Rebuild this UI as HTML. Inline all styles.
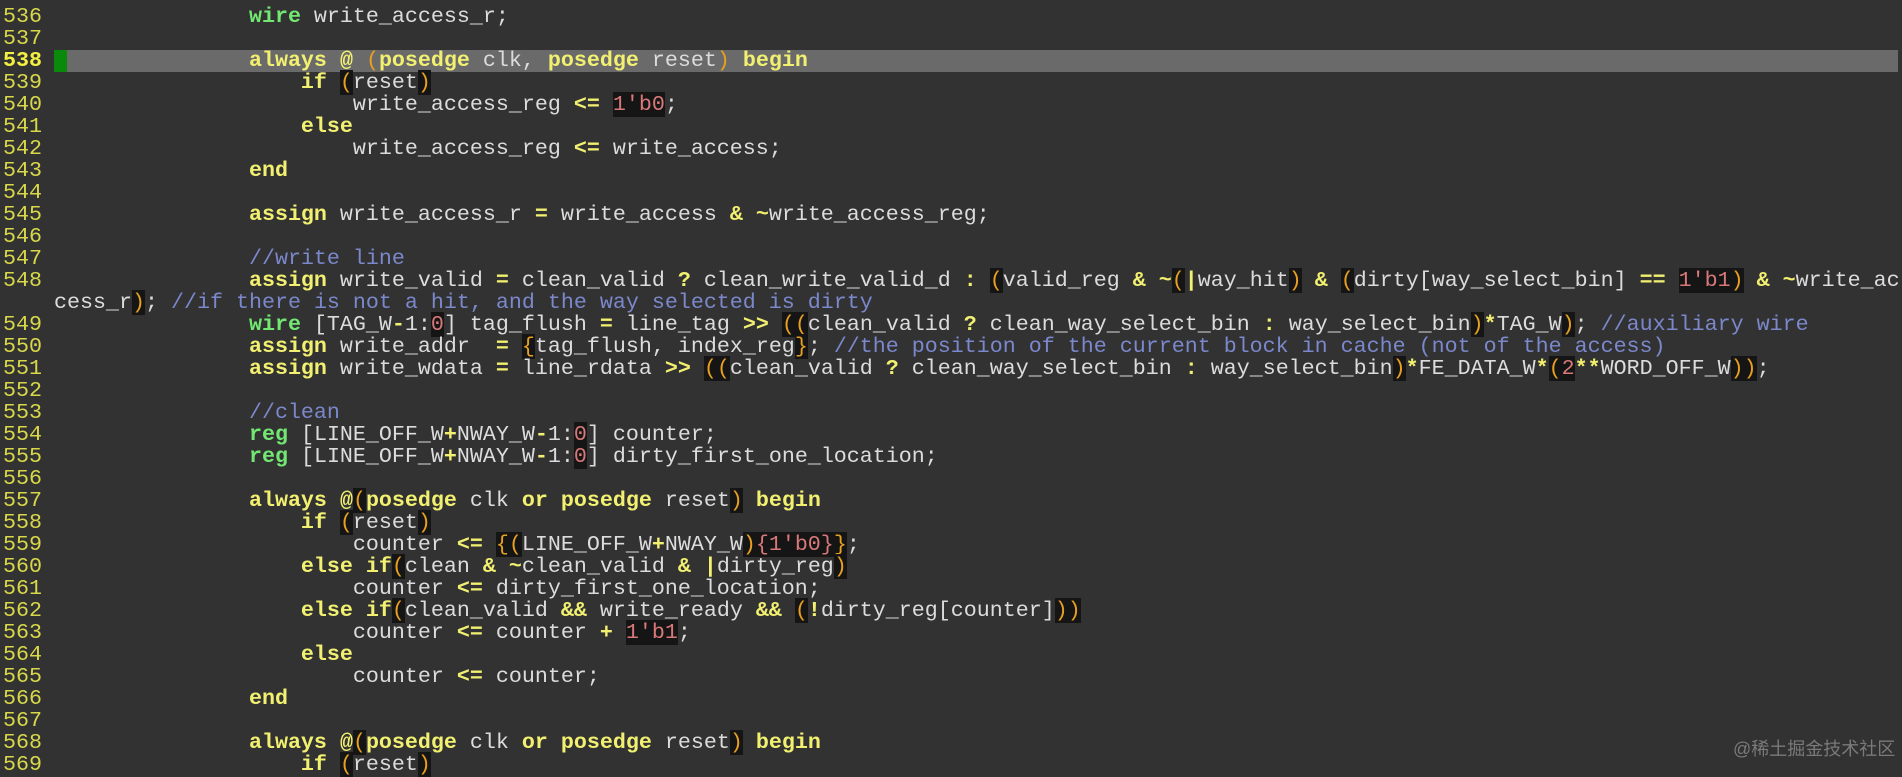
<!DOCTYPE html>
<html><head><meta charset="utf-8"><style>
html,body{margin:0;padding:0;background:#323232;width:1902px;height:771px;overflow:hidden}
.r{position:absolute;left:0;height:22px;width:1902px;font-family:"Liberation Mono",monospace;font-size:21.67px;line-height:22px;white-space:pre;color:#dcdcdc}
.ln{position:absolute;left:3px;color:#d8d84a}
.tx{position:absolute;left:54px}
.k{color:#f2f070;font-weight:bold}
.t{color:#72e872;font-weight:bold}
.o{color:#f2f070;font-weight:bold}
.p{color:#e8a020;background:#151515}
.n{color:#d87878;background:#151515}
.c{color:#7b88cc}
.hl{position:absolute;left:67px;width:1831px;top:0;height:22px;background:#6a6a6a}
.sg{position:absolute;left:54px;width:13px;top:0;height:22px;background:#0a8a0a}
.wm{position:absolute;left:1733px;top:735px;font-family:"Liberation Sans","Noto Sans CJK SC",sans-serif;font-size:18px;color:#7a7a7a}
</style></head><body>
<div class="r" style="top:6px"><span class="ln">536</span><span class="tx">               <span class="t">wire</span> write_access_r;</span></div>
<div class="r" style="top:28px"><span class="ln">537</span></div>
<div class="r" style="top:50px"><div class="hl"></div><div class="sg"></div><span class="ln" style="font-weight:bold;color:#f2f040">538</span><span class="tx">               <span class="k">always</span> <span class="o">@</span> <span style="color:#e8a020">(</span><span class="k">posedge</span> clk, <span class="k">posedge</span> reset<span style="color:#e8a020">)</span> <span class="k">begin</span></span></div>
<div class="r" style="top:72px"><span class="ln">539</span><span class="tx">                   <span class="k">if</span> <span class="p">(</span>reset<span class="p">)</span></span></div>
<div class="r" style="top:94px"><span class="ln">540</span><span class="tx">                       write_access_reg <span class="o">&lt;=</span> <span class="n">1'b0</span>;</span></div>
<div class="r" style="top:116px"><span class="ln">541</span><span class="tx">                   <span class="k">else</span></span></div>
<div class="r" style="top:138px"><span class="ln">542</span><span class="tx">                       write_access_reg <span class="o">&lt;=</span> write_access;</span></div>
<div class="r" style="top:160px"><span class="ln">543</span><span class="tx">               <span class="k">end</span></span></div>
<div class="r" style="top:182px"><span class="ln">544</span></div>
<div class="r" style="top:204px"><span class="ln">545</span><span class="tx">               <span class="k">assign</span> write_access_r <span class="o">=</span> write_access <span class="o">&amp;</span> <span class="o">~</span>write_access_reg;</span></div>
<div class="r" style="top:226px"><span class="ln">546</span></div>
<div class="r" style="top:248px"><span class="ln">547</span><span class="tx">               <span class="c">//write line</span></span></div>
<div class="r" style="top:270px"><span class="ln">548</span><span class="tx">               <span class="k">assign</span> write_valid <span class="o">=</span> clean_valid <span class="o">?</span> clean_write_valid_d <span class="o">:</span> <span class="p">(</span>valid_reg <span class="o">&amp;</span> <span class="o">~</span><span class="p">(</span><span class="o">|</span>way_hit<span class="p">)</span> <span class="o">&amp;</span> <span class="p">(</span>dirty[way_select_bin] <span class="o">==</span> <span class="n">1'b1</span><span class="p">)</span> <span class="o">&amp;</span> <span class="o">~</span>write_ac</span></div>
<div class="r" style="top:292px"><span class="tx">cess_r<span class="p">)</span>; <span class="c">//if there is not a hit, and the way selected is dirty</span></span></div>
<div class="r" style="top:314px"><span class="ln">549</span><span class="tx">               <span class="t">wire</span> [TAG_W<span class="o">-</span>1:<span class="n">0</span>] tag_flush <span class="o">=</span> line_tag <span class="o">&gt;&gt;</span> <span class="p">((</span>clean_valid <span class="o">?</span> clean_way_select_bin <span class="o">:</span> way_select_bin<span class="p">)</span><span class="o">*</span>TAG_W<span class="p">)</span>; <span class="c">//auxiliary wire</span></span></div>
<div class="r" style="top:336px"><span class="ln">550</span><span class="tx">               <span class="k">assign</span> write_addr  <span class="o">=</span> <span class="p">{</span>tag_flush, index_reg<span class="p">}</span>; <span class="c">//the position of the current block in cache (not of the access)</span></span></div>
<div class="r" style="top:358px"><span class="ln">551</span><span class="tx">               <span class="k">assign</span> write_wdata <span class="o">=</span> line_rdata <span class="o">&gt;&gt;</span> <span class="p">((</span>clean_valid <span class="o">?</span> clean_way_select_bin <span class="o">:</span> way_select_bin<span class="p">)</span><span class="o">*</span>FE_DATA_W<span class="o">*</span><span class="p">(</span><span class="n">2</span><span class="o">**</span>WORD_OFF_W<span class="p">))</span>;</span></div>
<div class="r" style="top:380px"><span class="ln">552</span></div>
<div class="r" style="top:402px"><span class="ln">553</span><span class="tx">               <span class="c">//clean</span></span></div>
<div class="r" style="top:424px"><span class="ln">554</span><span class="tx">               <span class="t">reg</span> [LINE_OFF_W<span class="o">+</span>NWAY_W<span class="o">-</span>1:<span class="n">0</span>] counter;</span></div>
<div class="r" style="top:446px"><span class="ln">555</span><span class="tx">               <span class="t">reg</span> [LINE_OFF_W<span class="o">+</span>NWAY_W<span class="o">-</span>1:<span class="n">0</span>] dirty_first_one_location;</span></div>
<div class="r" style="top:468px"><span class="ln">556</span></div>
<div class="r" style="top:490px"><span class="ln">557</span><span class="tx">               <span class="k">always</span> <span class="o">@</span><span class="p">(</span><span class="k">posedge</span> clk <span class="k">or</span> <span class="k">posedge</span> reset<span class="p">)</span> <span class="k">begin</span></span></div>
<div class="r" style="top:512px"><span class="ln">558</span><span class="tx">                   <span class="k">if</span> <span class="p">(</span>reset<span class="p">)</span></span></div>
<div class="r" style="top:534px"><span class="ln">559</span><span class="tx">                       counter <span class="o">&lt;=</span> <span class="p">{(</span>LINE_OFF_W<span class="o">+</span>NWAY_W<span class="p">)</span><span class="n">{1'b0}</span><span class="p">}</span>;</span></div>
<div class="r" style="top:556px"><span class="ln">560</span><span class="tx">                   <span class="k">else if</span><span class="p">(</span>clean <span class="o">&amp;</span> <span class="o">~</span>clean_valid <span class="o">&amp;</span> <span class="o">|</span>dirty_reg<span class="p">)</span></span></div>
<div class="r" style="top:578px"><span class="ln">561</span><span class="tx">                       counter <span class="o">&lt;=</span> dirty_first_one_location;</span></div>
<div class="r" style="top:600px"><span class="ln">562</span><span class="tx">                   <span class="k">else if</span><span class="p">(</span>clean_valid <span class="o">&amp;&amp;</span> write_ready <span class="o">&amp;&amp;</span> <span class="p">(</span><span class="o">!</span>dirty_reg[counter]<span class="p">))</span></span></div>
<div class="r" style="top:622px"><span class="ln">563</span><span class="tx">                       counter <span class="o">&lt;=</span> counter <span class="o">+</span> <span class="n">1'b1</span>;</span></div>
<div class="r" style="top:644px"><span class="ln">564</span><span class="tx">                   <span class="k">else</span></span></div>
<div class="r" style="top:666px"><span class="ln">565</span><span class="tx">                       counter <span class="o">&lt;=</span> counter;</span></div>
<div class="r" style="top:688px"><span class="ln">566</span><span class="tx">               <span class="k">end</span></span></div>
<div class="r" style="top:710px"><span class="ln">567</span></div>
<div class="r" style="top:732px"><span class="ln">568</span><span class="tx">               <span class="k">always</span> <span class="o">@</span><span class="p">(</span><span class="k">posedge</span> clk <span class="k">or</span> <span class="k">posedge</span> reset<span class="p">)</span> <span class="k">begin</span></span></div>
<div class="r" style="top:754px"><span class="ln">569</span><span class="tx">                   <span class="k">if</span> <span class="p">(</span>reset<span class="p">)</span></span></div>
<div class="wm">@稀土掘金技术社区</div>
</body></html>
